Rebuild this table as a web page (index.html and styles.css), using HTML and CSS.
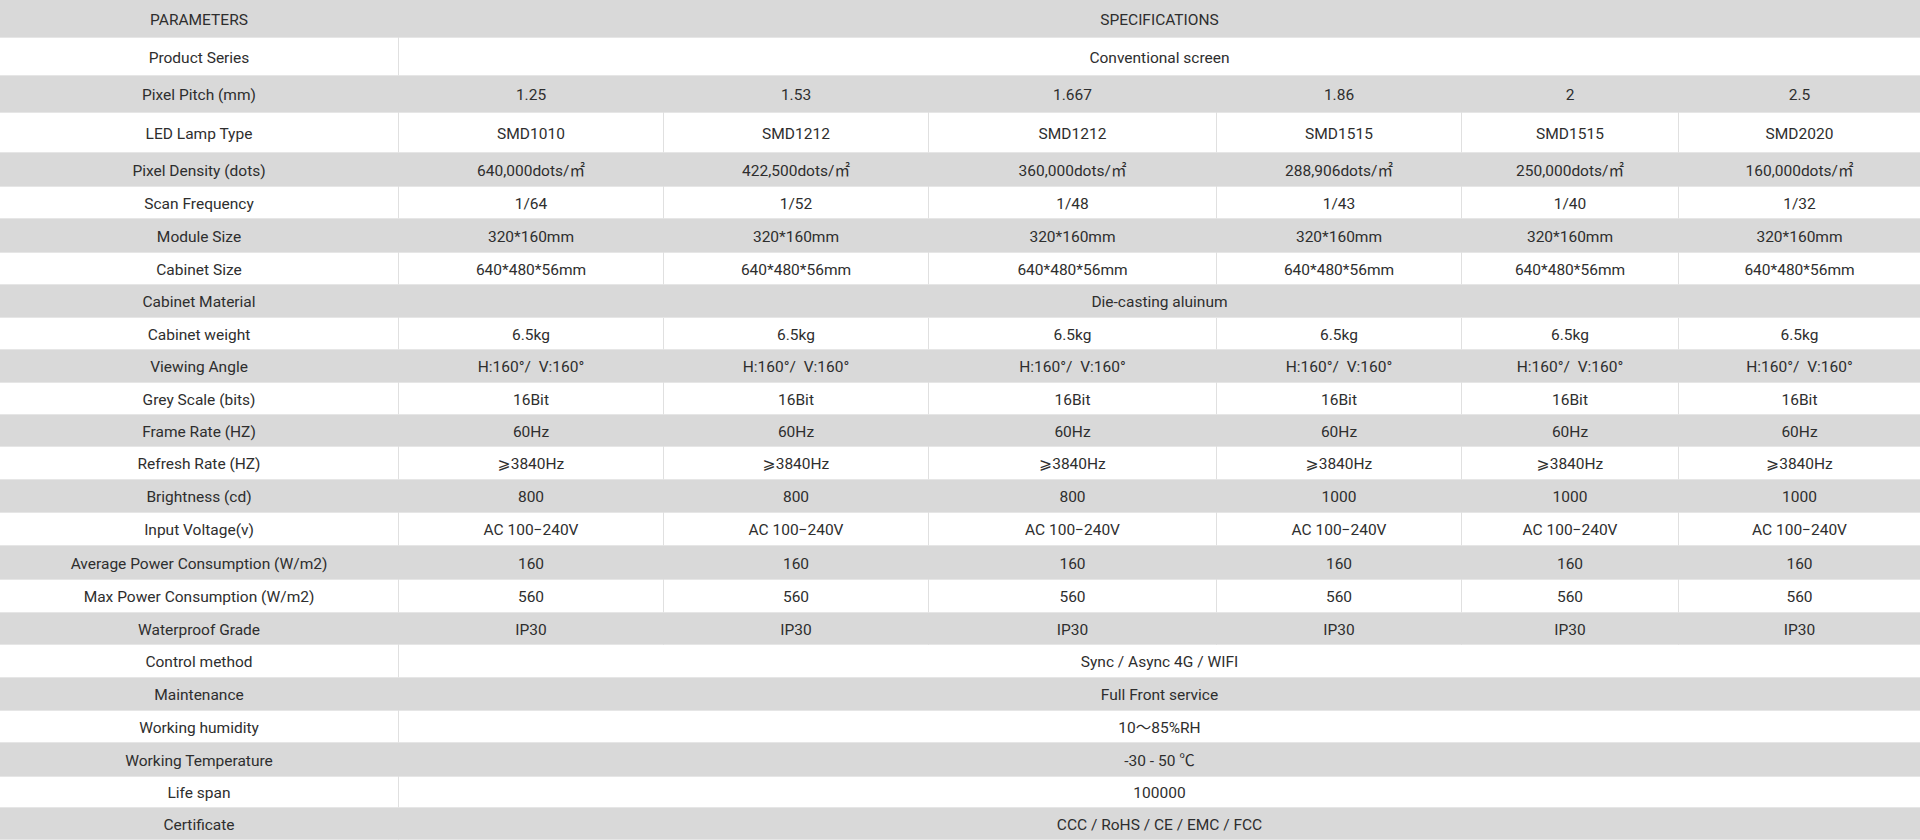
FILE: index.html
```html
<!DOCTYPE html>
<html lang="en">
<head>
<meta charset="utf-8">
<title>Specifications</title>
<link rel="stylesheet" href="styles.css">
</head>
<body>
<table class="spec">
  <colgroup>
    <col class="c-param">
    <col class="c-a">
    <col class="c-b">
    <col class="c-c">
    <col class="c-d">
    <col class="c-e">
    <col class="c-f">
  </colgroup>
  <tbody>
    <tr class="h38"><td>PARAMETERS</td><td colspan="6">SPECIFICATIONS</td></tr>
    <tr class="h38"><td>Product Series</td><td colspan="6">Conventional screen</td></tr>
    <tr class="h37"><td>Pixel Pitch (mm)</td><td>1.25</td><td>1.53</td><td>1.667</td><td>1.86</td><td>2</td><td>2.5</td></tr>
    <tr class="h40"><td>LED Lamp Type</td><td>SMD1010</td><td>SMD1212</td><td>SMD1212</td><td>SMD1515</td><td>SMD1515</td><td>SMD2020</td></tr>
    <tr class="h34"><td>Pixel Density (dots)</td><td>640,000dots/㎡</td><td>422,500dots/㎡</td><td>360,000dots/㎡</td><td>288,906dots/㎡</td><td>250,000dots/㎡</td><td>160,000dots/㎡</td></tr>
    <tr class="h32"><td>Scan Frequency</td><td>1/64</td><td>1/52</td><td>1/48</td><td>1/43</td><td>1/40</td><td>1/32</td></tr>
    <tr class="h34"><td>Module Size</td><td>320*160mm</td><td>320*160mm</td><td>320*160mm</td><td>320*160mm</td><td>320*160mm</td><td>320*160mm</td></tr>
    <tr class="h32"><td>Cabinet Size</td><td>640*480*56mm</td><td>640*480*56mm</td><td>640*480*56mm</td><td>640*480*56mm</td><td>640*480*56mm</td><td>640*480*56mm</td></tr>
    <tr class="h33"><td>Cabinet Material</td><td colspan="6">Die-casting aluinum</td></tr>
    <tr class="h32"><td>Cabinet weight</td><td>6.5kg</td><td>6.5kg</td><td>6.5kg</td><td>6.5kg</td><td>6.5kg</td><td>6.5kg</td></tr>
    <tr class="h33"><td>Viewing Angle</td><td>H:160°/&nbsp; V:160°</td><td>H:160°/&nbsp; V:160°</td><td>H:160°/&nbsp; V:160°</td><td>H:160°/&nbsp; V:160°</td><td>H:160°/&nbsp; V:160°</td><td>H:160°/&nbsp; V:160°</td></tr>
    <tr class="h32"><td>Grey Scale (bits)</td><td>16Bit</td><td>16Bit</td><td>16Bit</td><td>16Bit</td><td>16Bit</td><td>16Bit</td></tr>
    <tr class="h32"><td>Frame Rate (HZ)</td><td>60Hz</td><td>60Hz</td><td>60Hz</td><td>60Hz</td><td>60Hz</td><td>60Hz</td></tr>
    <tr class="h33"><td>Refresh Rate (HZ)</td><td>⩾3840Hz</td><td>⩾3840Hz</td><td>⩾3840Hz</td><td>⩾3840Hz</td><td>⩾3840Hz</td><td>⩾3840Hz</td></tr>
    <tr class="h33"><td>Brightness (cd)</td><td>800</td><td>800</td><td>800</td><td>1000</td><td>1000</td><td>1000</td></tr>
    <tr class="h33"><td>Input Voltage(v)</td><td>AC 100−240V</td><td>AC 100−240V</td><td>AC 100−240V</td><td>AC 100−240V</td><td>AC 100−240V</td><td>AC 100−240V</td></tr>
    <tr class="h34"><td>Average Power Consumption (W/m2)</td><td>160</td><td>160</td><td>160</td><td>160</td><td>160</td><td>160</td></tr>
    <tr class="h33"><td>Max Power Consumption (W/m2)</td><td>560</td><td>560</td><td>560</td><td>560</td><td>560</td><td>560</td></tr>
    <tr class="h32"><td>Waterproof Grade</td><td>IP30</td><td>IP30</td><td>IP30</td><td>IP30</td><td>IP30</td><td>IP30</td></tr>
    <tr class="h33"><td>Control method</td><td colspan="6">Sync / Async 4G / WIFI</td></tr>
    <tr class="h33"><td>Maintenance</td><td colspan="6">Full Front service</td></tr>
    <tr class="h32"><td>Working humidity</td><td colspan="6">10〜85%RH</td></tr>
    <tr class="h34"><td>Working Temperature</td><td colspan="6">-30 - 50 ℃</td></tr>
    <tr class="h31"><td>Life span</td><td colspan="6">100000</td></tr>
    <tr class="h32"><td>Certificate</td><td colspan="6">CCC / RoHS / CE / EMC / FCC</td></tr>
  </tbody>
</table>
</body>
</html>
```

FILE: styles.css
```css
html, body {
  margin: 0;
  padding: 0;
  background: #ffffff;
}

body {
  font-family: Roboto, "Noto Sans CJK SC", "DejaVu Sans", sans-serif;
  font-size: 15.5px;
  color: #2e2e2e;
}

.spec {
  width: 1920px;
  table-layout: fixed;
  border-collapse: separate;
  border-spacing: 0;
}

.c-param { width: 399px; }
.c-a { width: 265px; }
.c-b { width: 265px; }
.c-c { width: 288px; }
.c-d { width: 245px; }
.c-e { width: 217px; }
.c-f { width: 241px; }

.spec td {
  padding: 2px 0 0;
  text-align: center;
  vertical-align: middle;
  white-space: nowrap;
  border-bottom: 1px solid #e6e6e6;
  border-right: 1px solid #e0e0e0;
  line-height: 18px;
}

.spec td:last-child {
  border-right: none;
}

.spec tr:nth-child(odd) td {
  background: #d9d9d9;
  border-right-color: transparent;
}

.h31 { height: 31px; }
.h32 { height: 32px; }
.h33 { height: 33px; }
.h34 { height: 34px; }
.h37 { height: 37px; }
.h38 { height: 38px; }
.h40 { height: 40px; }
```
